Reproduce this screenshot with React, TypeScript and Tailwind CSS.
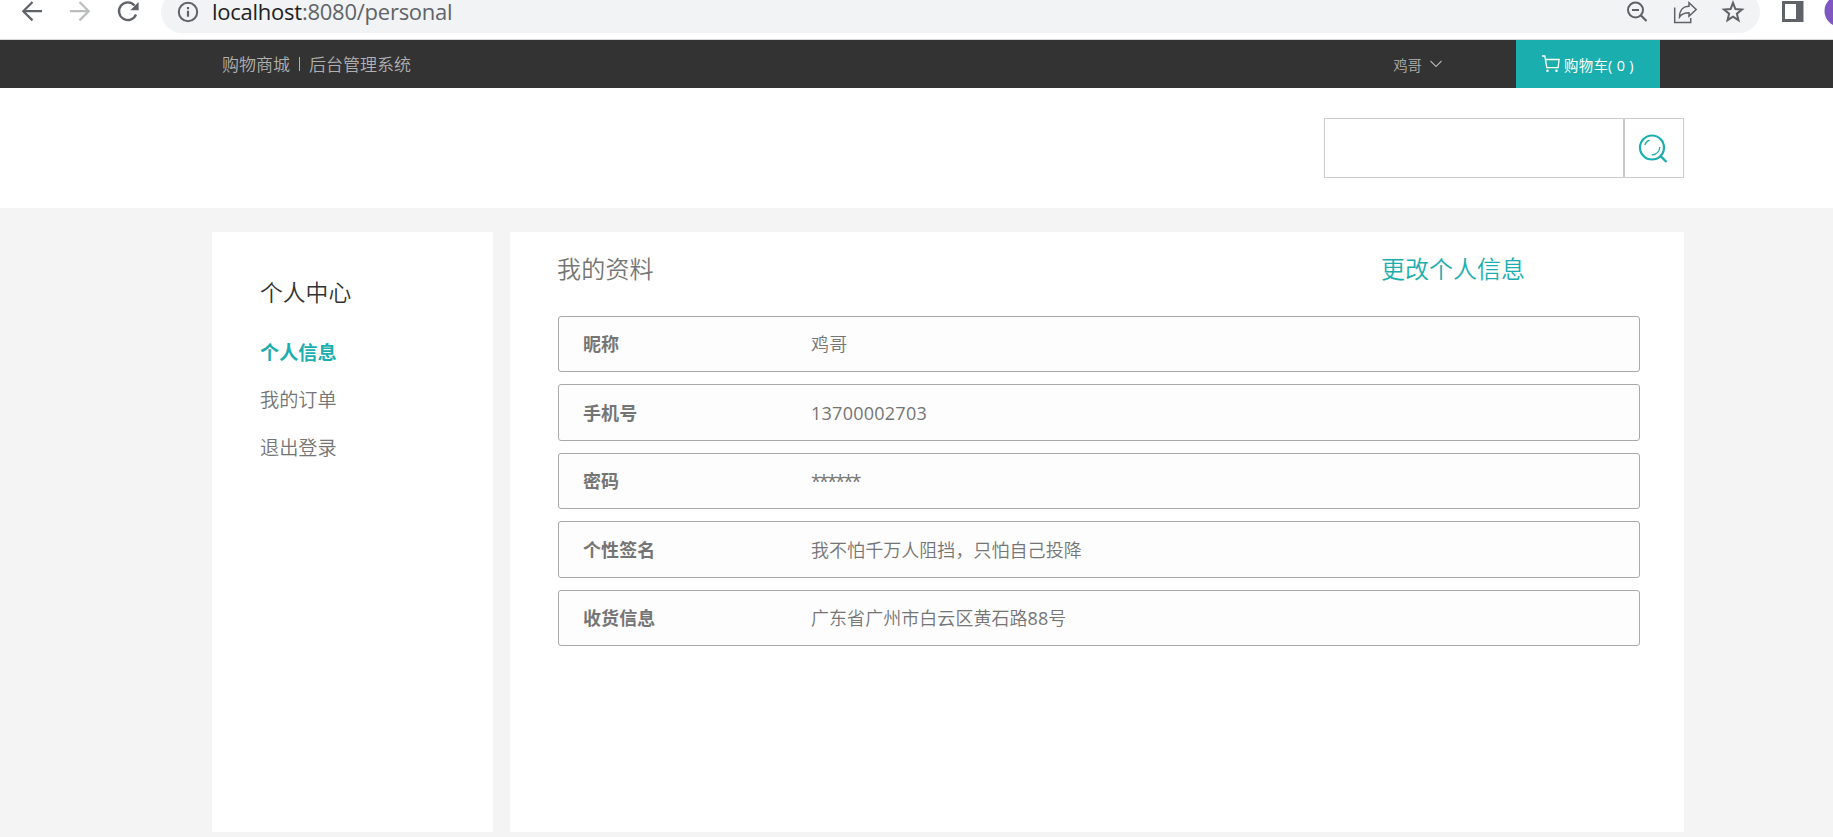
import type { ReactNode } from "react";

const rows: { label: string; value: ReactNode; cls: string }[] = [
  { label: "昵称", value: "鸡哥", cls: "tracking-[0.2px]" },
  { label: "手机号", value: "13700002703", cls: "font-normal tracking-[0.25px]" },
  { label: "密码", value: "******", cls: "font-normal tracking-[-1.8px]" },
  { label: "个性签名", value: "我不怕千万人阻挡，只怕自己投降", cls: "tracking-[0.05px]" },
  {
    label: "收货信息",
    value: (
      <>
        广东省广州市白云区黄石路<span className="font-normal">88</span>号
      </>
    ),
    cls: "tracking-[0.05px]",
  },
];

function Icon({ children, className, box }: { children: ReactNode; className: string; box: string }) {
  return (
    <svg viewBox={box} className={className} fill="none">
      {children}
    </svg>
  );
}

function BrowserBar() {
  return (
    <div className="flex h-10 items-start border-b border-[#d5d7da] bg-white font-normal text-[#5f6368]">
      <Icon box="0 0 160 40" className="h-10 w-[160px] shrink-0">
        <path d="M42 11.200H23M32.500 2l-9.200 9.200 9.200 9.200" stroke="#5f6368" strokeWidth="2.200" />
        <path d="M70 11.200H89M79.500 2l9.200 9.200-9.200 9.200" stroke="#babcbe" strokeWidth="2.200" />
        <path d="M136 14.500A8.800 8.800 0 1 1 134.500 5.500" stroke="#5f6368" strokeWidth="2.300" />
        <path d="M138.600 2v8.300h-8.300z" fill="#5f6368" />
      </Icon>
      <div className="-mt-[9px] ml-px flex h-[42px] w-[1599px] shrink-0 items-center rounded-full bg-[#f1f3f4]">
        <Icon box="0 0 24 24" className="ml-[15px] size-6 shrink-0">
          <circle cx="12" cy="12" r="9.200" stroke="#5f6368" strokeWidth="2" />
          <path d="M12 10.800v6M12 7v2.200" stroke="#5f6368" strokeWidth="2.200" />
        </Icon>
        <div className="-mt-[2px] ml-3 font-['Open_Sans','Noto_Sans',sans-serif] text-[22px] leading-[22px] tracking-[-0.25px]">
          <span className="text-[#202124]">localhost</span>:8080/personal
        </div>
        <Icon box="0 0 130 26" className="ml-auto mr-[10px] h-[26px] w-[130px]">
          <circle cx="15.500" cy="11" r="7.500" stroke="#5f6368" strokeWidth="2" />
          <path d="M12 11h7M20.500 16l6 6" stroke="#5f6368" strokeWidth="2.200" />
          <path d="M54.700 8.500v15h16v-4.500" stroke="#5f6368" strokeWidth="1.500" />
          <path d="M59.500 18c0-7 4-10.700 9.500-10.700V3.700l7.200 6.800-7.200 6.800v-3.600c-4.500 0-7.500 1.100-9.500 4.300z" stroke="#5f6368" strokeWidth="1.500" />
          <path d="m113 3.800 2.400 6.200 6.600.5-5.100 4.200 1.600 6.500-5.500-3.500-5.500 3.500 1.600-6.500-5.100-4.200 6.600-.5z" stroke="#5f6368" strokeWidth="2" />
        </Icon>
      </div>
      <Icon box="0 0 73 40" className="h-10 w-[73px] shrink-0">
        <path d="M22 1h21.500v21h-21.500zM25 4v15h11V4z" fill="#5f6368" fillRule="evenodd" />
        <circle cx="80" cy="11" r="15.500" fill="#7e57c2" />
      </Icon>
    </div>
  );
}

function TopNav() {
  return (
    <nav className="flex h-12 bg-[#333] pl-[222px] pr-[173px] text-[#b0b0b0]">
      <div className="flex items-center pt-[2px] text-[17px] leading-6">
        <span>购物商城</span>
        <span className="mx-[9px] mb-[3px] h-[14px] w-px bg-[#b0b0b0]" />
        <span>后台管理系统</span>
      </div>
      <div className="ml-auto mr-[73px] flex items-center text-[14.4px]">
        <span className="mt-[3px]">鸡哥</span>
        <Icon box="0 0 14 8" className="ml-[7px] h-2 w-[14px]">
          <path d="M1.500 1 7 6.500 12.500 1" stroke="#b0b0b0" strokeWidth="1.100" />
        </Icon>
      </div>
      <div className="flex w-36 items-center bg-[#1baeae] pl-[26px] text-[14.4px] font-normal text-white">
        <Icon box="0 0 18 18" className="size-[18px]">
          <path d="M0 1h2.800l2 11.600h11.300l1-8.100H3.600" stroke="white" strokeWidth="1.300" />
          <circle cx="5.500" cy="15.800" r="1.300" fill="white" />
          <circle cx="14.500" cy="15.800" r="1.300" fill="white" />
        </Icon>
        <span className="ml-1 mt-[3px] whitespace-pre tracking-[0.3px]">购物车( 0 )</span>
      </div>
    </nav>
  );
}

function SearchHeader() {
  return (
    <header className="flex h-[120px] items-center justify-end bg-white pr-[149px]">
      <input aria-label="搜索" className="h-[60px] w-[300px] border border-[#ccc] bg-white px-4 outline-none" />
      <button className="flex size-[60px] items-center justify-center border border-[#ccc] bg-white">
        <Icon box="0 0 30 30" className="mr-[2px] size-[30px]">
          <circle cx="14" cy="14.500" r="12" stroke="#1baeae" strokeWidth="2.200" />
          <path d="m22.500 23 6 6" stroke="#1baeae" strokeWidth="2.400" />
          <path d="M6.800 12.100a7.500 7.500 0 0 1 4.800-4.900M21.800 14a8 8 0 0 1-8 8" stroke="#1baeae" strokeWidth="1.300" />
        </Icon>
      </button>
    </header>
  );
}

function Sidebar() {
  return (
    <aside className="h-[600px] w-[281px] bg-white pl-12 pt-[41px]">
      <h2 className="text-[22.800px] leading-[40px] text-[#333]">个人中心</h2>
      <ul className="mt-[15px] text-[19.200px] leading-[48px] text-[#757575]">
        <li className="pt-px font-bold leading-[47px] text-[#1baeae]">个人信息</li>
        <li>我的订单</li>
        <li>退出登录</li>
      </ul>
    </aside>
  );
}

function Profile() {
  return (
    <main className="h-[600px] w-[1174px] bg-white pl-12">
      <div className="flex h-[84px] justify-between pr-[159px] pt-[13px] text-[24px] leading-[48px] text-[#757575]">
        <h1 className="-ml-px tracking-[0.2px]">我的资料</h1>
        <a className="text-[#1baeae]">更改个人信息</a>
      </div>
      <dl className="flex w-[1082px] flex-col gap-3 text-[18px] text-[#757575]">
        {rows.map((row) => (
          <div key={row.label} className="flex h-[56.400px] items-center rounded-[3px] border border-[#a9a9a9] bg-[#fdfdfd] pl-6 pt-[1.500px]">
            <dt className="w-[228px] font-bold tracking-[0.1px]">{row.label}</dt>
            <dd className={row.cls}>{row.value}</dd>
          </div>
        ))}
      </dl>
    </main>
  );
}

export default function App() {
  return (
    <div className="h-[837px] overflow-hidden bg-[#f4f4f4] font-['Open_Sans','Noto_Sans_CJK_SC',sans-serif] font-[350]">
      <BrowserBar />
      <TopNav />
      <SearchHeader />
      <div className="flex gap-[17px] pl-[212px] pt-6">
        <Sidebar />
        <Profile />
      </div>
    </div>
  );
}
